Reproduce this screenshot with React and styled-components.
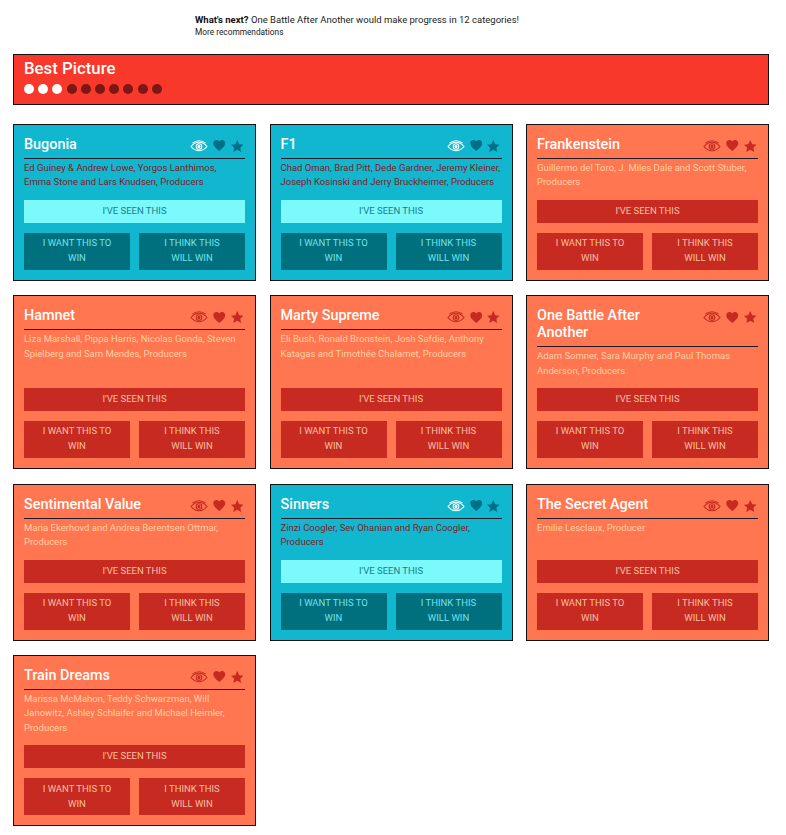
import React from "react"
import styled, { createGlobalStyle } from "styled-components"

const GlobalStyle = createGlobalStyle`
  body {
    margin: 0;
    background: #fff;
    font-family: Roboto, "Liberation Sans", sans-serif;
  }
`

const Page = styled.div`
  width: 756px;
  padding: 13px 17px 9px 13px;
`

const Next = styled.div`
  margin-left: 182px;
  height: 41px;
  color: #222;
`

const NextLine = styled.p`
  margin: 0;
  font-size: 9.5px;
  line-height: 13px;
  & b {
    font-weight: 700;
    color: #111;
  }
`

const MoreLink = styled.a`
  display: block;
  font-size: 8.3px;
  line-height: 13px;
  color: #222;
`

const Banner = styled.div`
  box-sizing: border-box;
  height: 51px;
  background: #f7382a;
  border: 1px solid #111;
  padding: 2px 10px 0;
  margin-bottom: 18.8px;
`

const BannerTitle = styled.h1`
  margin: 0;
  font-size: 16.8px;
  line-height: 22px;
  font-weight: 500;
  color: #fff;
`

const Dots = styled.div`
  display: flex;
  gap: 4.2px;
  margin-top: 5px;
`

const Dot = styled.span`
  width: 10px;
  height: 10px;
  border-radius: 50%;
  background: ${(p) => (p.$on ? "#fff" : "#7b1714")};
`

const Grid = styled.div`
  display: grid;
  grid-template-columns: repeat(3, 243px);
  column-gap: 13.5px;
  row-gap: 14.4px;
`

const Card = styled.div`
  display: flex;
  flex-direction: column;
  box-sizing: border-box;
  padding: 10px;
  border: 1px solid #111;
  background: ${(p) => (p.$seen ? "#11b7cf" : "#ff7650")};
`

const CardHead = styled.div`
  display: flex;
  justify-content: space-between;
  align-items: flex-start;
  padding: 1px 0 5px;
  border-bottom: 1px solid #1b1b2a;
`

const Title = styled.h2`
  margin: 0;
  max-width: 150px;
  font-size: 14.4px;
  line-height: 17px;
  font-weight: 500;
  color: #fff;
`

const Icons = styled.div`
  display: flex;
  align-items: center;
  gap: 5px;
  margin-top: 4px;
  margin-right: 2px;
`

const Names = styled.p`
  margin: 2px 0 0;
  flex: 1;
  font-size: 9.5px;
  line-height: 14.5px;
  color: ${(p) => (p.$seen ? "#80202a" : "#ffd0a4")};
`

const Wide = styled.button`
  display: block;
  width: 100%;
  height: 23px;
  margin-top: 10px;
  padding: 0 0 2px;
  border: 0;
  font: inherit;
  font-size: 9.5px;
  background: ${(p) => (p.$seen ? "#7cf9fb" : "#c62a20")};
  color: ${(p) => (p.$seen ? "#17808c" : "#f9c0a0")};
`

const Pair = styled.div`
  display: grid;
  grid-template-columns: 106px 106px;
  justify-content: space-between;
  margin-top: 10px;
`

const Half = styled.button`
  height: 37px;
  padding: 0 14px 2.6px;
  border: 0;
  font: inherit;
  font-size: 9.5px;
  line-height: 15px;
  background: ${(p) => (p.$seen ? "#00707f" : "#c62a20")};
  color: ${(p) => (p.$seen ? "#74e2e8" : "#f9c0a0")};
`

const Eye = ({ color }) => (
  <svg width="18" height="12" viewBox="0 0 18 12" fill="none" stroke={color} strokeWidth="1.1">
    <path d="M1 6.500C3.500 3.500 6 2.300 9 2.300s5.500 1.200 8 4.200c-2.500 3-5 4.300-8 4.300s-5.500-1.300-8-4.300z" />
    <path d="M2.500 3.200C4.500 1.500 6.500.7 9 .7s4.500.8 6.500 2.500" />
    <circle cx="9" cy="6.500" r="2.800" />
    <circle cx="9" cy="6.500" r="1" fill={color} />
  </svg>
)

const Heart = ({ color }) => (
  <svg width="12.500" height="11" viewBox="0 0 24 22" fill={color}>
    <path d="M12 22C5 16 0 12 0 6.500 0 2.800 2.800 0 6.300 0 8.500 0 10.700 1 12 3c1.300-2 3.500-3 5.700-3C21.200 0 24 2.800 24 6.500 24 12 19 16 12 22z" />
  </svg>
)

const Star = ({ color }) => (
  <svg width="12.500" height="12" viewBox="0 0 24 23" fill={color}>
    <path d="M12 0l3.700 7.900 8.300 1-6.100 5.800 1.600 8.300-7.500-4.100L4.500 23l1.600-8.300L0 8.900l8.300-1z" />
  </svg>
)

const films = [
  { title: "Bugonia", names: "Ed Guiney & Andrew Lowe, Yorgos Lanthimos, Emma Stone and Lars Knudsen, Producers", seen: true },
  { title: "F1", names: "Chad Oman, Brad Pitt, Dede Gardner, Jeremy Kleiner, Joseph Kosinski and Jerry Bruckheimer, Producers", seen: true },
  { title: "Frankenstein", names: "Guillermo del Toro, J. Miles Dale and Scott Stuber, Producers" },
  { title: "Hamnet", names: "Liza Marshall, Pippa Harris, Nicolas Gonda, Steven Spielberg and Sam Mendes, Producers" },
  { title: "Marty Supreme", names: "Eli Bush, Ronald Bronstein, Josh Safdie, Anthony Katagas and Timothée Chalamet, Producers" },
  { title: "One Battle After Another", names: "Adam Somner, Sara Murphy and Paul Thomas Anderson, Producers" },
  { title: "Sentimental Value", names: "Maria Ekerhovd and Andrea Berentsen Ottmar, Producers" },
  { title: "Sinners", names: "Zinzi Coogler, Sev Ohanian and Ryan Coogler, Producers", seen: true },
  { title: "The Secret Agent", names: "Emilie Lesclaux, Producer" },
  { title: "Train Dreams", names: "Marissa McMahon, Teddy Schwarzman, Will Janowitz, Ashley Schlaifer and Michael Heimler, Producers" },
]

const FilmCard = ({ title, names, seen }) => {
  const eye = seen ? "#fff" : "#c62a20"
  const mark = seen ? "#00708a" : "#c62a20"
  return (
    <Card $seen={seen}>
      <CardHead>
        <Title>{title}</Title>
        <Icons>
          <Eye color={eye} />
          <Heart color={mark} />
          <Star color={mark} />
        </Icons>
      </CardHead>
      <Names $seen={seen}>{names}</Names>
      <Wide $seen={seen}>I'VE SEEN THIS</Wide>
      <Pair>
        <Half $seen={seen}>I WANT THIS TO WIN</Half>
        <Half $seen={seen}>I THINK THIS WILL WIN</Half>
      </Pair>
    </Card>
  )
}

export default function App() {
  return (
    <Page>
      <GlobalStyle />
      <Next>
        <NextLine>
          <b>What's next?</b> One Battle After Another would make progress in 12 categories!
        </NextLine>
        <MoreLink>More recommendations</MoreLink>
      </Next>
      <Banner>
        <BannerTitle>Best Picture</BannerTitle>
        <Dots>
          {Array.from({ length: 10 }, (_, i) => (
            <Dot key={i} $on={i < 3} />
          ))}
        </Dots>
      </Banner>
      <Grid>
        {films.map((film) => (
          <FilmCard key={film.title} {...film} />
        ))}
      </Grid>
    </Page>
  )
}
